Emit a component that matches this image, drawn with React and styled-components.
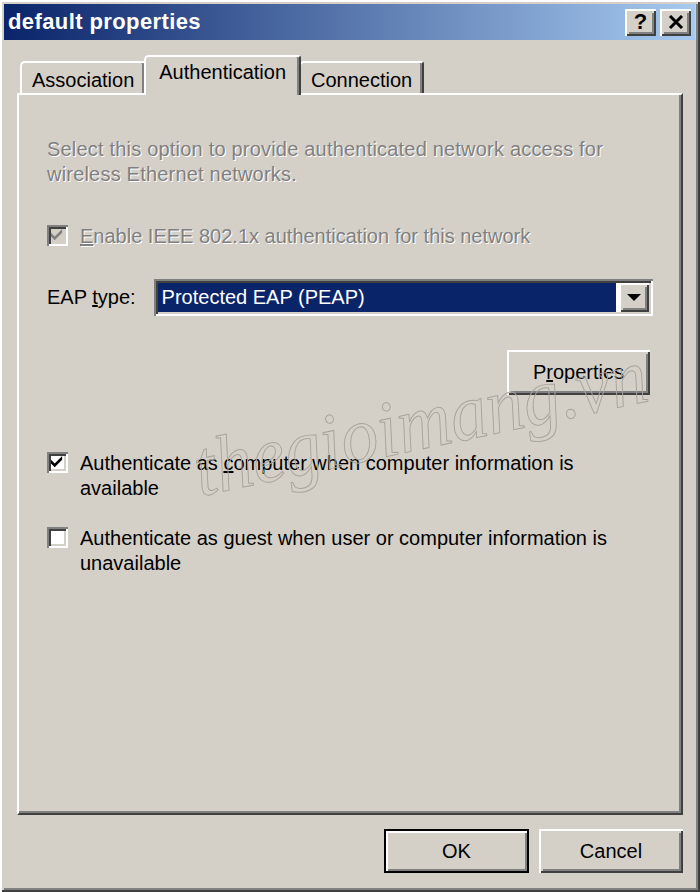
import React from "react";
import styled, { createGlobalStyle } from "styled-components";

const Global = createGlobalStyle`
  html, body { margin: 0; padding: 0; background: #d4d0c8; }
  body { font-family: "Liberation Sans", Arial, sans-serif; }
`;

const raised = `
  box-shadow: inset 2px 2px 0 #ffffff, inset -2px -2px 0 #404040,
    inset 4px 4px 0 #d4d0c8, inset -4px -4px 0 #808080;
`;

const sunken = `
  box-shadow: inset 2px 2px 0 #808080, inset -2px -2px 0 #ffffff,
    inset 4px 4px 0 #404040, inset -4px -4px 0 #d4d0c8;
`;

const Window = styled.div`
  position: relative;
  box-sizing: border-box;
  width: 700px;
  height: 892px;
  padding: 4px 5px 5px 4px;
  display: flex;
  flex-direction: column;
  background: #d4d0c8;
  ${raised}
  overflow: hidden;
`;

const TitleBar = styled.div`
  height: 36px;
  display: flex;
  align-items: center;
  justify-content: space-between;
  padding: 0 4px 0 4px;
  background: linear-gradient(to right, #0a246a, #a6caf0);
`;

const Title = styled.span`
  color: #fff;
  font-weight: bold;
  font-size: 22px;
  letter-spacing: 0.4px;
`;

const Caps = styled.div`
  display: flex;
  gap: 4px;
`;

const CapButton = styled.div`
  width: 31px;
  height: 27px;
  box-sizing: border-box;
  background: #d4d0c8;
  ${raised}
  display: flex;
  align-items: center;
  justify-content: center;
  font-weight: bold;
  font-size: 22px;
  color: #000;
`;

const Body = styled.div`
  flex: 1;
  display: flex;
  flex-direction: column;
  padding: 15px 12px 0 13px;
`;

const TabStrip = styled.div`
  display: flex;
  align-items: flex-end;
  height: 38px;
  padding-left: 3px;
  position: relative;
  z-index: 2;
`;

const Tab = styled.div`
  box-sizing: border-box;
  height: ${(p) => (p.$active ? "40px" : "32px")};
  margin: ${(p) => (p.$active ? "0 -2px -2px" : "0")};
  padding: ${(p) => (p.$active ? "4px 13px 0" : "6px 10px 0")};
  font-size: 20px;
  color: #000;
  background: #d4d0c8;
  border-top: 2px solid #fff;
  border-left: 2px solid #fff;
  border-right: 2px solid #404040;
  border-radius: 5px 3px 0 0;
  box-shadow: inset -2px 0 0 #808080;
  z-index: ${(p) => (p.$active ? 3 : 1)};
`;

const Panel = styled.div`
  position: relative;
  box-sizing: border-box;
  height: 722px;
  padding: 42px 28px 0 28px;
  background: #d4d0c8;
  border-top: 2px solid #fff;
  border-left: 2px solid #fff;
  border-right: 2px solid #404040;
  border-bottom: 2px solid #404040;
  box-shadow: inset -2px -2px 0 #808080;
  font-size: 20px;
  color: #000;
`;

const Disabled = styled.div`
  color: #808080;
  text-shadow: 1px 1px 0 #fff;
  line-height: 25px;
  letter-spacing: 0.2px;
`;

const CheckRow = styled.div`
  display: flex;
  align-items: flex-start;
  gap: 12px;
  margin-top: ${(p) => p.$top}px;
  line-height: 25px;
  color: ${(p) => (p.$disabled ? "#808080" : "#000")};
  text-shadow: ${(p) => (p.$disabled ? "1px 1px 0 #fff" : "none")};
`;

const Box = styled.div`
  flex: none;
  width: 21px;
  height: 21px;
  margin-top: 1px;
  box-sizing: border-box;
  background: ${(p) => (p.$disabled ? "#d4d0c8" : "#fff")};
  ${sunken}
  display: flex;
  align-items: center;
  justify-content: center;
`;

const EapRow = styled.div`
  display: flex;
  align-items: center;
  margin-top: 30px;
  gap: 18px;
`;

const Combo = styled.div`
  flex: 1;
  height: 37px;
  box-sizing: border-box;
  padding: 4px;
  background: #fff;
  ${sunken}
  display: flex;
  gap: 3px;
`;

const Selected = styled.div`
  flex: 1;
  background: #0a246a;
  color: #fff;
  display: flex;
  align-items: center;
  padding-left: 4px;
  font-size: 20px;
`;

const DropButton = styled.div`
  width: 30px;
  box-sizing: border-box;
  background: #d4d0c8;
  ${raised}
  display: flex;
  align-items: center;
  justify-content: center;
`;

const RightRow = styled.div`
  display: flex;
  justify-content: flex-end;
  margin-top: 34px;
  padding-right: 3px;
`;

const Button = styled.div`
  box-sizing: border-box;
  width: ${(p) => p.$w}px;
  height: ${(p) => p.$h}px;
  background: #d4d0c8;
  ${(p) =>
    p.$default
      ? `border: 2px solid #000; box-shadow: inset 2px 2px 0 #fff, inset -2px -2px 0 #808080;`
      : raised}
  display: flex;
  align-items: center;
  justify-content: center;
  font-size: 20px;
  color: #000;
`;

const Footer = styled.div`
  flex: 1;
  display: flex;
  justify-content: flex-end;
  align-items: flex-start;
  gap: 10px;
  padding-top: 14px;
`;

const Watermark = styled.div`
  position: absolute;
  left: 184px;
  top: 334px;
  font-family: "Liberation Serif", "Times New Roman", serif;
  font-style: italic;
  font-size: 80px;
  line-height: 80px;
  color: transparent;
  -webkit-text-stroke: 1px #a8a49c;
  transform: rotate(-12deg) scaleX(0.93);
  transform-origin: left bottom;
  pointer-events: none;
  white-space: nowrap;
`;

const Check = ({ color }) => (
  <svg width="13" height="13" viewBox="0 0 7 7">
    <path d="M0 2 L2 4 L6 0 L6 2 L2 6 L0 4 Z" fill={color} />
  </svg>
);

export default function App() {
  return (
    <>
      <Global />
      <Window>
        <TitleBar>
          <Title>default properties</Title>
          <Caps>
            <CapButton>?</CapButton>
            <CapButton>
              <svg width="16" height="14" viewBox="0 0 16 14">
                <path d="M2 1 L14 13 M14 1 L2 13" stroke="#000" strokeWidth="3" />
              </svg>
            </CapButton>
          </Caps>
        </TitleBar>
        <Body>
          <TabStrip>
            <Tab>Association</Tab>
            <Tab $active>Authentication</Tab>
            <Tab>Connection</Tab>
          </TabStrip>
          <Panel>
            <Disabled>
              Select this option to provide authenticated network access for
              <br />
              wireless Ethernet networks.
            </Disabled>
            <CheckRow $top={37} $disabled>
              <Box $disabled>
                <Check color="#808080" />
              </Box>
              <span>
                <u>E</u>nable IEEE 802.1x authentication for this network
              </span>
            </CheckRow>
            <EapRow>
              <span>
                EAP <u>t</u>ype:
              </span>
              <Combo>
                <Selected>Protected EAP (PEAP)</Selected>
                <DropButton>
                  <svg width="14" height="8" viewBox="0 0 14 8">
                    <path d="M0 0 H14 L7 7 Z" fill="#000" />
                  </svg>
                </DropButton>
              </Combo>
            </EapRow>
            <RightRow>
              <Button $w={143} $h={45}>
                P<u>r</u>operties
              </Button>
            </RightRow>
            <CheckRow $top={56}>
              <Box>
                <Check color="#000" />
              </Box>
              <span>
                Authenticate as <u>c</u>omputer when computer information is
                <br />
                available
              </span>
            </CheckRow>
            <CheckRow $top={25}>
              <Box />
              <span>
                Authenticate as <u>g</u>uest when user or computer information is
                <br />
                unavailable
              </span>
            </CheckRow>
            <Watermark>thegioimang.vn</Watermark>
          </Panel>
          <Footer>
            <Button $w={145} $h={44} $default>
              OK
            </Button>
            <Button $w={144} $h={44}>
              Cancel
            </Button>
          </Footer>
        </Body>
      </Window>
    </>
  );
}
